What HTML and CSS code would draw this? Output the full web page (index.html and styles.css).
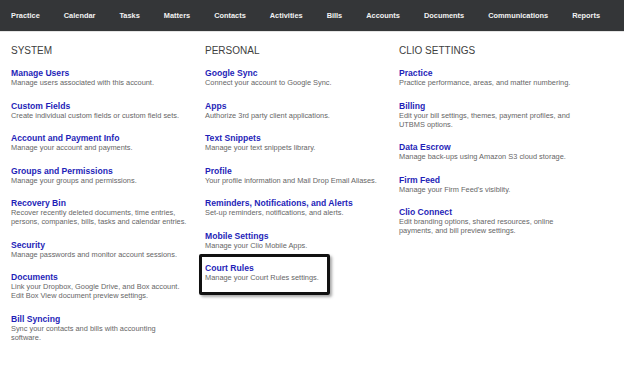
FILE: index.html
```html
<html>
  <head>
    <title>Settings</title>
    <link rel="stylesheet" href="styles.css">
  </head>
  <body>
    <nav class="nav">
      <a>Practice</a>
      <a>Calendar</a>
      <a>Tasks</a>
      <a>Matters</a>
      <a>Contacts</a>
      <a>Activities</a>
      <a>Bills</a>
      <a>Accounts</a>
      <a>Documents</a>
      <a>Communications</a>
      <a>Reports</a>
    </nav>

    <div class="columns">
      <section class="group">
        <h2>SYSTEM</h2>
        <div class="item">
          <a class="title">Manage Users</a>
          <p class="desc">Manage users associated with this account.</p>
        </div>
        <div class="item">
          <a class="title">Custom Fields</a>
          <p class="desc">Create individual custom fields or custom field sets.</p>
        </div>
        <div class="item">
          <a class="title">Account and Payment Info</a>
          <p class="desc">Manage your account and payments.</p>
        </div>
        <div class="item">
          <a class="title">Groups and Permissions</a>
          <p class="desc">Manage your groups and permissions.</p>
        </div>
        <div class="item">
          <a class="title">Recovery Bin</a>
          <p class="desc">Recover recently deleted documents, time entries, persons, companies, bills, tasks and calendar entries.</p>
        </div>
        <div class="item">
          <a class="title">Security</a>
          <p class="desc">Manage passwords and monitor account sessions.</p>
        </div>
        <div class="item">
          <a class="title">Documents</a>
          <p class="desc">Link your Dropbox, Google Drive, and Box account. Edit Box View document preview settings.</p>
        </div>
        <div class="item">
          <a class="title">Bill Syncing</a>
          <p class="desc">Sync your contacts and bills with accounting<br>software.</p>
        </div>
      </section>

      <section class="group">
        <h2>PERSONAL</h2>
        <div class="item">
          <a class="title">Google Sync</a>
          <p class="desc">Connect your account to Google Sync.</p>
        </div>
        <div class="item">
          <a class="title">Apps</a>
          <p class="desc">Authorize 3rd party client applications.</p>
        </div>
        <div class="item">
          <a class="title">Text Snippets</a>
          <p class="desc">Manage your text snippets library.</p>
        </div>
        <div class="item">
          <a class="title">Profile</a>
          <p class="desc">Your profile information and Mail Drop Email Aliases.</p>
        </div>
        <div class="item">
          <a class="title">Reminders, Notifications, and Alerts</a>
          <p class="desc">Set-up reminders, notifications, and alerts.</p>
        </div>
        <div class="item">
          <a class="title">Mobile Settings</a>
          <p class="desc">Manage your Clio Mobile Apps.</p>
        </div>
        <div class="item highlight">
          <a class="title">Court Rules</a>
          <p class="desc">Manage your Court Rules settings.</p>
        </div>
      </section>

      <section class="group">
        <h2>CLIO SETTINGS</h2>
        <div class="item">
          <a class="title">Practice</a>
          <p class="desc">Practice performance, areas, and matter numbering.</p>
        </div>
        <div class="item">
          <a class="title">Billing</a>
          <p class="desc">Edit your bill settings, themes, payment profiles, and UTBMS options.</p>
        </div>
        <div class="item">
          <a class="title">Data Escrow</a>
          <p class="desc">Manage back-ups using Amazon S3 cloud storage.</p>
        </div>
        <div class="item">
          <a class="title">Firm Feed</a>
          <p class="desc">Manage your Firm Feed's visiblity.</p>
        </div>
        <div class="item">
          <a class="title">Clio Connect</a>
          <p class="desc">Edit branding options, shared resources, online payments, and bill preview settings.</p>
        </div>
      </section>
    </div>
  </body>
</html>
```

FILE: styles.css
```css
body {
  margin: 0;
  background: #fff;
  font-family: 'Liberation Sans', Arial, sans-serif;
}
.nav {
  display: flex;
  align-items: center;
  gap: 24px;
  height: 31px;
  padding: 0 11px;
  background: #343638;
  border-bottom: 1px solid #e4e4e4;
}
.nav a {
  color: #f2f2f2;
  font-size: 7.4px;
  font-weight: bold;
}
.columns {
  display: grid;
  grid-template-columns: 194px 194px 1fr;
  padding: 13px 11px 0;
}
.group h2 {
  margin: 0 0 11px;
  font-size: 10px;
  line-height: 12px;
  font-weight: normal;
  color: #404040;
}
.item {
  position: relative;
  margin-bottom: 13.5px;
  max-width: 182px;
}
.item .title {
  display: block;
  font-size: 8.6px;
  line-height: 10px;
  font-weight: bold;
  color: #1f1fb8;
}
.item .desc {
  margin: 0;
  font-size: 7.4px;
  line-height: 9px;
  color: #666;
}
/* callout box drawn over the Court Rules entry */
.highlight::after {
  content: '';
  position: absolute;
  top: -9px;
  left: -6px;
  width: 125px;
  height: 35px;
  border: 3px solid #111;
  border-radius: 2px;
  box-shadow: 2px 2px 3px rgba(0, 0, 0, 0.35);
}
```
